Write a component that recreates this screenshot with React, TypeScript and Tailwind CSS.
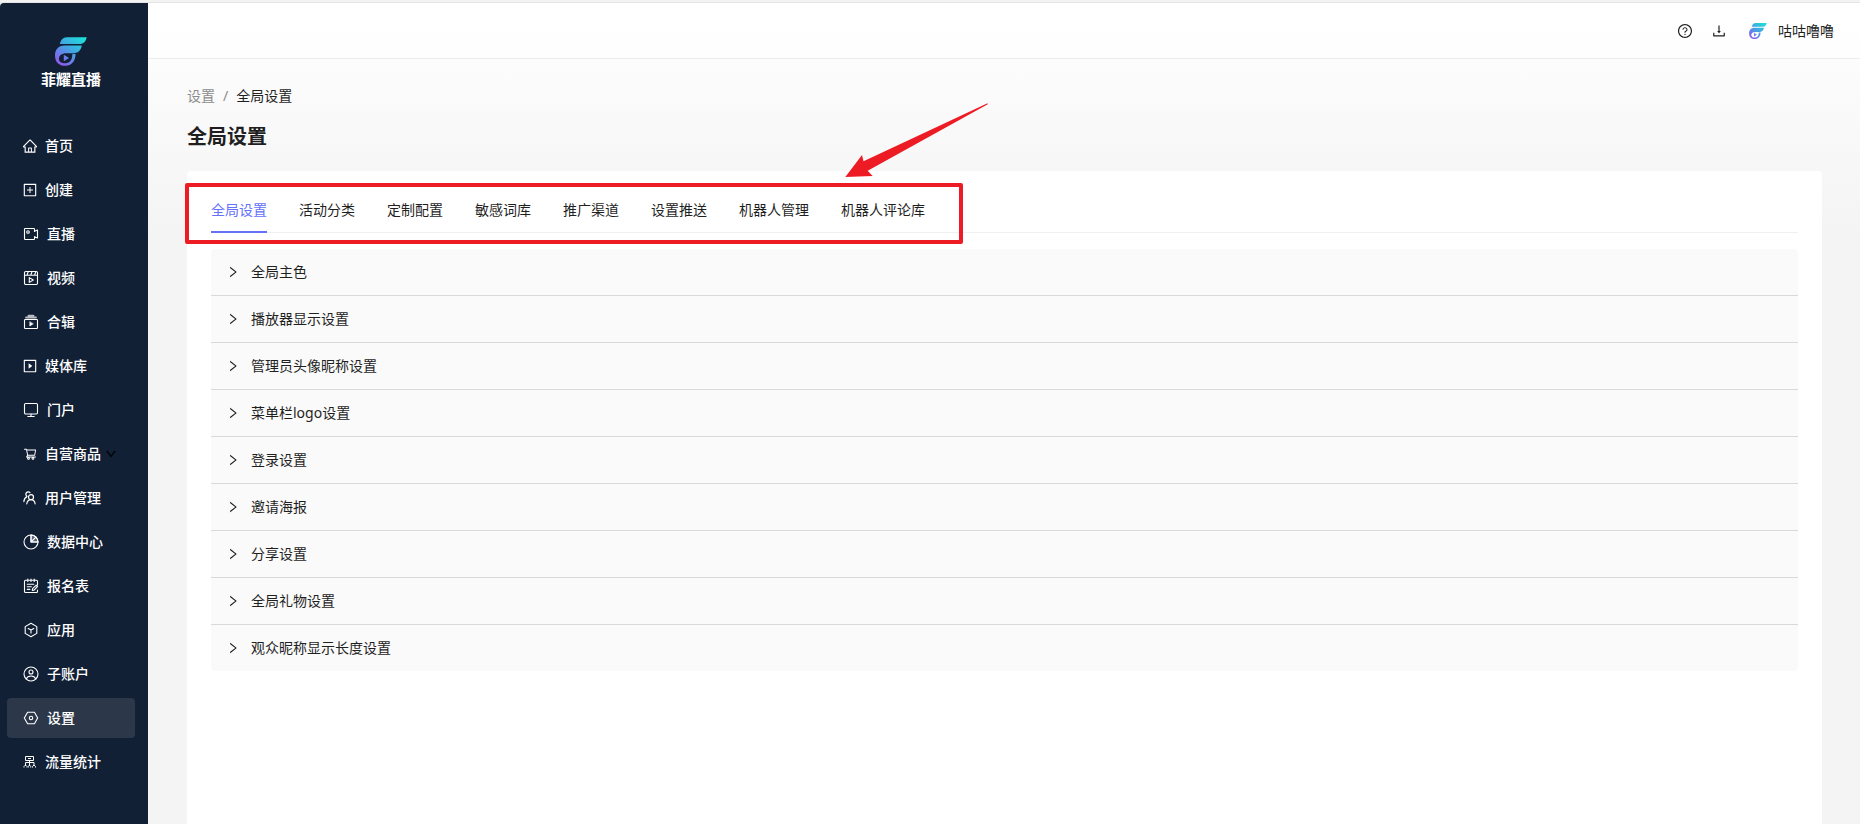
import { useState, type ReactNode } from 'react';
import {
  AiOutlineDown,
  AiOutlineDownload,
  AiOutlineHome,
  AiOutlinePlaySquare,
  AiOutlinePlusSquare,
  AiOutlineQuestionCircle,
  AiOutlineRight,
  AiOutlineShoppingCart,
} from 'react-icons/ai';

interface IconProps {
  className?: string;
}

function Logo({ id, className }: IconProps & { id: string }) {
  return (
    <svg viewBox="0 0 98 88" className={className} aria-hidden="true">
      <defs>
        <linearGradient id={id} x1="85" y1="0" x2="15" y2="88" gradientUnits="userSpaceOnUse">
          <stop offset="0" stopColor="#1ce0d8" />
          <stop offset="0.45" stopColor="#3fa9e2" />
          <stop offset="1" stopColor="#9355f0" />
        </linearGradient>
      </defs>
      <g fill={`url(#${id})`}>
        <path d="M15 21C17 9 24 0 36 0H97C95 12 87 21 75 21Z" />
        <path d="M28 26H82C80 39 72 49 60 49H34C21 49 12 56 12 66C12 75 20 80 32 80C46 80 53 70 53 52H63C63 74 50 88 32 88C12 88 0 76 0 56C0 38 12 26 28 26Z" />
        <path d="M27 54L43 64L27 74Z" />
      </g>
    </svg>
  );
}

function StrokeIcon({ children }: { children: ReactNode }) {
  return (
    <svg
      viewBox="0 0 16 16"
      className="size-4"
      fill="none"
      stroke="currentColor"
      strokeWidth="1.1"
      strokeLinecap="round"
      strokeLinejoin="round"
      aria-hidden="true"
    >
      {children}
    </svg>
  );
}

const LiveIcon = () => (
  <StrokeIcon>
    <path d="M11.5 5.5V3.2a.7.7 0 0 0-.7-.7H2.2a.7.7 0 0 0-.7.7v9.6c0 .4.3.7.7.7h8.6c.4 0 .7-.3.7-.7v-2.3M11.5 5.3l3-1.3v8l-3-1.3" />
    <circle cx="5" cy="6" r="1.3" />
  </StrokeIcon>
);

const VideoIcon = () => (
  <StrokeIcon>
    <rect x="1.5" y="1.5" width="13" height="13" rx="1.2" />
    <path d="M1.5 5.2h13M5.2 1.8L4 5M9 1.8L7.8 5M12.8 1.8L11.6 5M6.3 7.6v4.8l4-2.4z" />
  </StrokeIcon>
);

const AlbumIcon = () => (
  <StrokeIcon>
    <rect x="1.5" y="5.5" width="13" height="9" rx="0.8" />
    <path d="M3 3.5h10M5.5 1.7h5" strokeWidth="1.8" strokeOpacity="0.7" />
    <path d="M6.8 8v4l3.2-2z" fill="currentColor" strokeWidth="0.6" />
  </StrokeIcon>
);

const PortalIcon = () => (
  <StrokeIcon>
    <rect x="1.5" y="1.5" width="13" height="10.5" rx="1.2" />
    <path d="M8 12v2.3M4.8 14.5h6.4" />
  </StrokeIcon>
);

const UsersIcon = () => (
  <svg
    viewBox="0 0 14 14"
    className="size-3.5"
    fill="none"
    stroke="currentColor"
    strokeWidth="1.2"
    strokeLinecap="round"
    aria-hidden="true"
  >
    <circle cx="8" cy="6.2" r="2.5" />
    <path d="M3.8 12.8c.3-2.4 1.9-4.2 4.2-4.2s3.8 1.8 4.1 4.2M7 1.6a2.4 2.4 0 1 0-3 3.7M.9 10.6c.1-2.4 1-4 3-5" />
  </svg>
);

const DataIcon = () => (
  <StrokeIcon>
    <circle cx="8" cy="8" r="7" />
    <path d="M8 1v7h7M8 8l4.9-4.9" />
    <path d="M8 1v7h7A7 7 0 0 0 8 1z" fill="currentColor" fillOpacity="0.3" />
  </StrokeIcon>
);

const FormIcon = () => (
  <StrokeIcon>
    <path d="M14.5 7V3.2c0-.6-.4-1-1-1h-11c-.6 0-1 .4-1 1v10.3c0 .6.4 1 1 1h11c.6 0 1-.4 1-1V12M4.8 1v2.4M8 1v2.4M11.2 1v2.4M4.3 6.2h6.5M4.3 8.8h4M4.3 11.4h2.5" />
    <path d="M9.3 12.4l.3-1.8 3.6-3.4 1.3 1.3-3.4 3.6z" />
  </StrokeIcon>
);

const AppIcon = () => (
  <StrokeIcon>
    <path d="M8 1.2l5.8 3.4v6.8L8 14.8l-5.8-3.4V4.6zM5.2 6.5L8 8.1l2.8-1.6M8 8.1v3" />
  </StrokeIcon>
);

const AccountIcon = () => (
  <StrokeIcon>
    <circle cx="8" cy="8" r="7" />
    <circle cx="8" cy="6" r="2" />
    <path d="M3.2 13c.8-2 2.6-3 4.8-3s4 1 4.8 3" />
  </StrokeIcon>
);

const SettingsIcon = () => (
  <StrokeIcon>
    <path d="M4.6 2.2h6.8L14.7 8l-3.3 5.8H4.6L1.3 8z" />
    <circle cx="8" cy="8" r="1.7" />
  </StrokeIcon>
);

const TrafficIcon = () => (
  <svg viewBox="0 0 14 14" className="size-3.5" fill="none" stroke="currentColor" aria-hidden="true">
    <path d="M2.5 1.5h8v4h-8zM5 3.5h3M6.5 5.5v5M2.5 10.5v-3h8.5v3" />
    <path d="M1 12.5v-1l1.5-1.5L4 11.5v1M5.3 12.5v-1l1.2-1.5 1.2 1.5v1M9.5 12.5v-1L11 10l1.5 1.5v1" />
  </svg>
);

const MENU: { label: string; icon: ReactNode; hasChildren?: boolean }[] = [
  { label: '首页', icon: <AiOutlineHome className="-mx-px size-4" /> },
  { label: '创建', icon: <AiOutlinePlusSquare className="-mx-px size-4" /> },
  { label: '直播', icon: <LiveIcon /> },
  { label: '视频', icon: <VideoIcon /> },
  { label: '合辑', icon: <AlbumIcon /> },
  { label: '媒体库', icon: <AiOutlinePlaySquare className="-mx-px size-4" /> },
  { label: '门户', icon: <PortalIcon /> },
  { label: '自营商品', icon: <AiOutlineShoppingCart className="size-3.5" />, hasChildren: true },
  { label: '用户管理', icon: <UsersIcon /> },
  { label: '数据中心', icon: <DataIcon /> },
  { label: '报名表', icon: <FormIcon /> },
  { label: '应用', icon: <AppIcon /> },
  { label: '子账户', icon: <AccountIcon /> },
  { label: '设置', icon: <SettingsIcon /> },
  { label: '流量统计', icon: <TrafficIcon /> },
];

const TABS = ['全局设置', '活动分类', '定制配置', '敏感词库', '推广渠道', '设置推送', '机器人管理', '机器人评论库'];

const SECTIONS = [
  '全局主色',
  '播放器显示设置',
  '管理员头像昵称设置',
  '菜单栏logo设置',
  '登录设置',
  '邀请海报',
  '分享设置',
  '全局礼物设置',
  '观众昵称显示长度设置',
];

function Sidebar() {
  return (
    <aside className="w-37 shrink-0 rounded-tl bg-[#122036] text-white">
      <div className="flex flex-col items-center pt-[34px] pr-1.5">
        <Logo id="sidebar-logo" className="h-[29px] w-8" />
        <span className="mt-[3px] text-[15px] leading-5 font-bold">菲耀直播</span>
      </div>
      <nav className="mt-[37px] flex flex-col gap-1 pr-[13px] pl-[7px]">
        {MENU.map((item) => (
          <a
            key={item.label}
            href="#"
            className={`flex h-10 items-center gap-2 rounded pl-4 font-medium ${
              item.label === '设置' ? 'bg-[#2c374a]' : ''
            }`}
          >
            {item.icon}
            <span className="whitespace-nowrap">{item.label}</span>
            {item.hasChildren && <AiOutlineDown className="-ml-1 size-3 stroke-black stroke-[40] text-black" />}
          </a>
        ))}
      </nav>
    </aside>
  );
}

function Header() {
  return (
    <header className="flex h-14 items-center justify-end border-b border-[#ededed] bg-white/60 pr-[26px]">
      <button type="button" aria-label="帮助">
        <AiOutlineQuestionCircle className="size-4" />
      </button>
      <button type="button" aria-label="下载" className="ml-[18px]">
        <AiOutlineDownload className="size-4" />
      </button>
      <button type="button" className="ml-[22px] flex items-center gap-[11px]">
        <Logo id="avatar-logo" className="h-4 w-[18px]" />
        <span>咕咕噜噜</span>
      </button>
    </header>
  );
}

// Red frame round the tab bar with an arrow that points to it
function Annotation() {
  return (
    <>
      <div className="pointer-events-none absolute top-3 -left-0.5 h-[61px] w-[778px] rounded-xs border-4 border-[#ed1c24]" />
      <svg
        viewBox="0 0 144 76"
        className="pointer-events-none absolute -top-[68px] left-[658px] h-[76px] w-36"
        aria-hidden="true"
      >
        <path d="M142.5 0.3L18.5 58.3L17 52L0.3 74L27.7 73L22.7 67.7L142.8 1.2Z" fill="#ed1c24" />
      </svg>
    </>
  );
}

export default function App() {
  const [activeTab, setActiveTab] = useState(TABS[0]);

  return (
    <div className="flex min-h-screen flex-col bg-[#f3f3f3] font-['Noto_Sans','Noto_Sans_CJK_SC',sans-serif] text-sm text-[#1f1f1f]">
      <div className="h-[3px] border-b border-[#e5e5e5]" />
      <div className="flex flex-1">
        <Sidebar />
        <div className="flex min-w-0 flex-1 flex-col bg-linear-to-b from-white to-[#f4f4f4] to-28%">
          <Header />
          <main className="flex flex-1 flex-col pt-[26px] pr-[38px] pl-[39px]">
            <nav aria-label="breadcrumb" className="flex gap-2 leading-[22px]">
              <a href="#" className="text-[#8c8c8c]">
                设置
              </a>
              <span className="text-[#8c8c8c]">/</span>
              <span>全局设置</span>
            </nav>
            <h1 className="mt-3.5 text-xl leading-8 font-bold">全局设置</h1>

            <section className="relative mt-[18px] flex-1 rounded-t bg-white px-6 pt-4">
              <div role="tablist" className="flex h-[46px] gap-8 border-b border-[#f0f0f0]">
                {TABS.map((tab) => (
                  <button
                    key={tab}
                    type="button"
                    role="tab"
                    aria-selected={tab === activeTab}
                    onClick={() => setActiveTab(tab)}
                    className={`-mb-px border-b-2 pt-0.5 whitespace-nowrap ${
                      tab === activeTab ? 'border-[#6472fa] text-[#6472fa]' : 'border-transparent'
                    }`}
                  >
                    {tab}
                  </button>
                ))}
              </div>

              <div className="mt-4 divide-y divide-[#d9d9d9] overflow-hidden rounded bg-[#fafafa]">
                {SECTIONS.map((title) => (
                  <div key={title}>
                    <button type="button" aria-expanded={false} className="flex h-[46px] w-full items-center gap-3 px-4">
                      <AiOutlineRight className="-mx-px size-3.5" />
                      <span>{title}</span>
                    </button>
                  </div>
                ))}
              </div>

              <Annotation />
            </section>
          </main>
        </div>
      </div>
    </div>
  );
}
